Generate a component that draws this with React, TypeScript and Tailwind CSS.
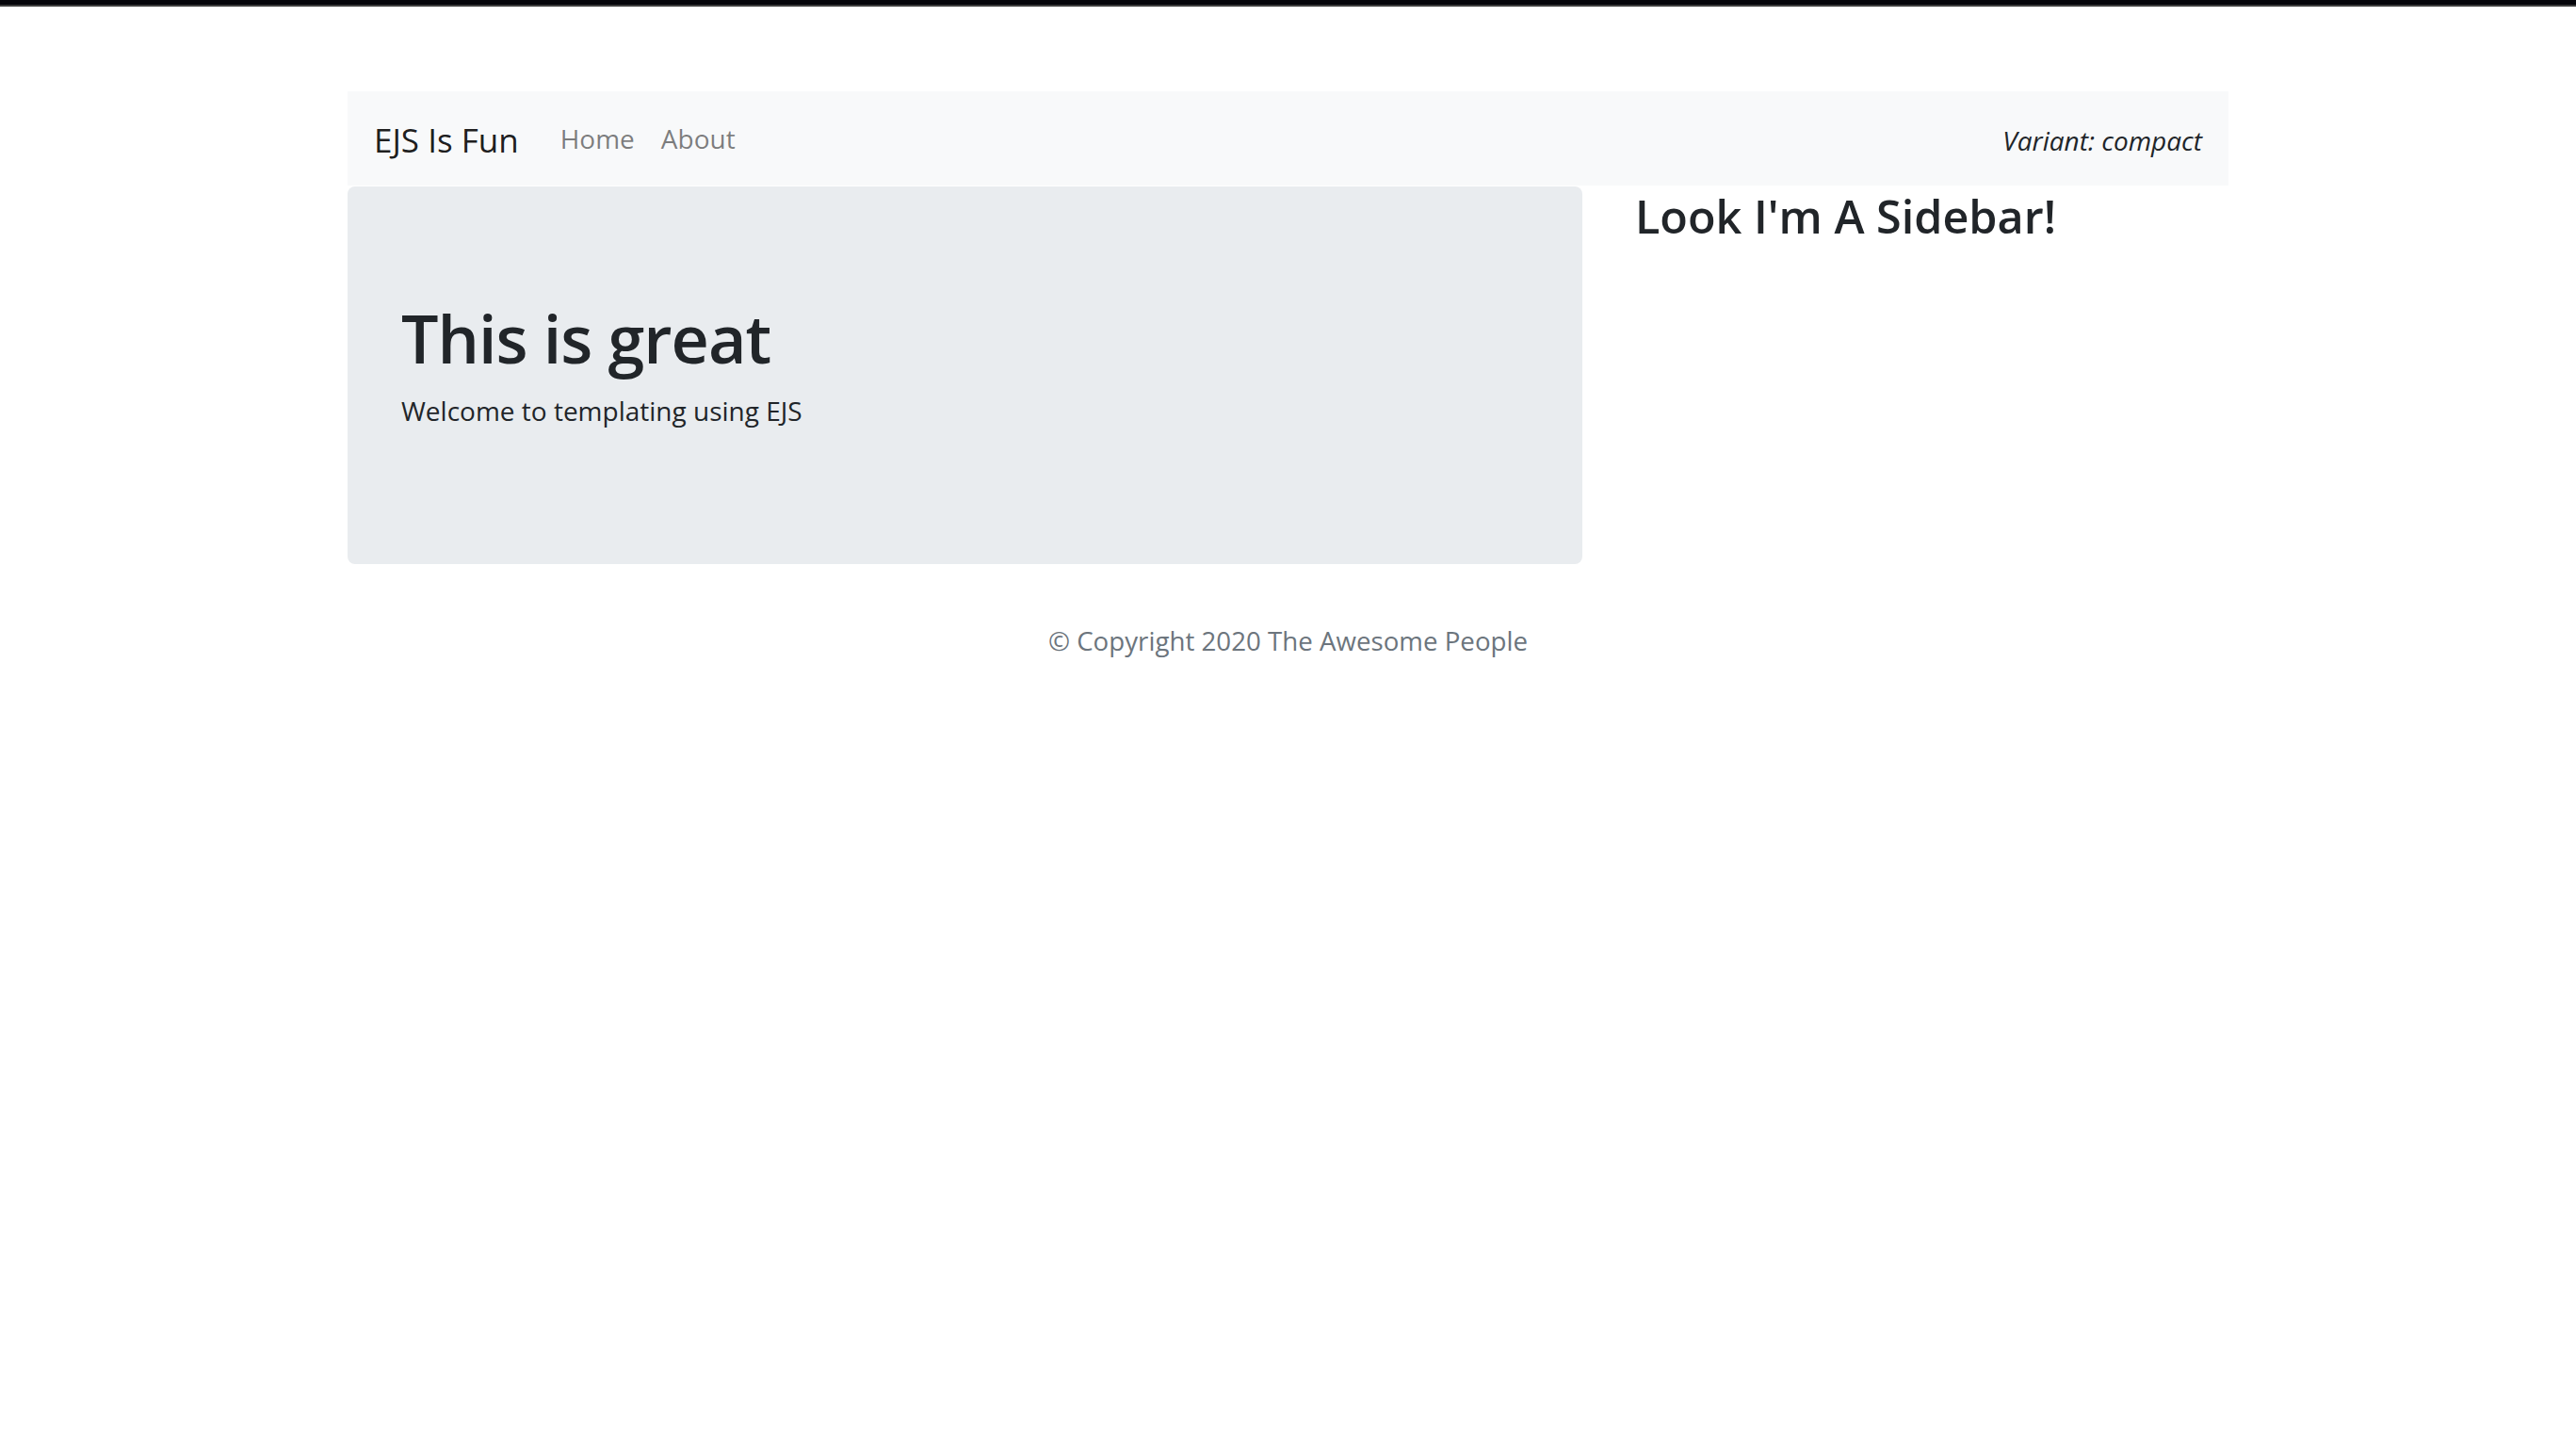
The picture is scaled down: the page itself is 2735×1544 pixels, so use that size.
export default function App() {
  return (
    <div className="min-h-screen bg-white font-['Open_Sans',sans-serif] text-[#212529]">
      {/* strip along the top edge of the screenshot */}
      <div className="h-[5px] bg-[#05050a]" />
      <div className="h-[2px] bg-[#3c3c3c]" />

      <div className="mx-auto w-[1997px] pt-[90px]">
        <nav className="flex h-[100px] items-center bg-[#f8f9fa] px-[28px] pt-[3px]">
          <a href="#" className="mr-[30px] text-[35px] leading-none text-black/90">
            EJS Is Fun
          </a>
          <ul className="flex items-center">
            <li>
              <a href="#" className="px-[14px] text-[28px] leading-none text-black/50">
                Home
              </a>
            </li>
            <li>
              <a href="#" className="px-[14px] text-[28px] leading-none text-black/50">
                About
              </a>
            </li>
          </ul>
          <span className="ml-auto text-[28px] italic leading-none">Variant: compact</span>
        </nav>

        <div className="mt-[1px] flex gap-[56px]">
          <main className="h-[401px] w-[1311px] rounded-[8px] bg-[#e9ecef] px-[57px] pt-[119px]">
            <h1 className="text-[70px] font-semibold leading-[1.2] tracking-[-1px]">This is great</h1>
            <p className="mt-[14px] text-[28px] leading-[1.5]">Welcome to templating using EJS</p>
          </main>
          <aside className="pt-[2px]">
            <h2 className="text-[48.5px] font-semibold leading-[1.2]">Look I'm A Sidebar!</h2>
          </aside>
        </div>

        <footer className="pt-[61px] text-center text-[27.7px] leading-[1.5] text-[#6c757d]">
          © Copyright 2020 The Awesome People
        </footer>
      </div>
    </div>
  );
}
